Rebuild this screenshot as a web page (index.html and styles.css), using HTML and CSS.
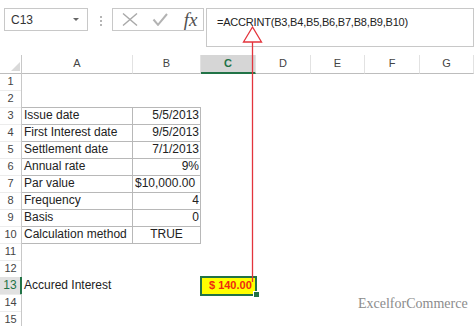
FILE: index.html
```html
<!doctype html>
<html lang="en">
  <head>
    <meta charset="UTF-8" />
    <meta name="viewport" content="width=device-width, initial-scale=1.0" />
    <title>ACCRINT</title>
    <link rel="stylesheet" href="styles.css">
  </head>
  <body>
    <div id="app">
      <div class="formula-bar">
        <div class="name-box">
          <span>C13</span>
          <span class="caret"></span>
        </div>
        <div class="grip"><i></i><i></i><i></i></div>
        <div class="fx-buttons">
          <svg class="cancel" width="16" height="13" viewBox="0 0 16 13">
            <path d="M1 0.5 L15 12.5 M15 0.5 L1 12.5" stroke="#a9a9a9" stroke-width="1.4" fill="none" />
          </svg>
          <svg class="enter" width="16" height="13" viewBox="0 0 16 13">
            <path d="M1.5 6.5 L6 11.8 L15 1" stroke="#b3b3b3" stroke-width="2" fill="none" />
          </svg>
          <span class="fx">fx</span>
        </div>
        <div class="formula">=ACCRINT(B3,B4,B5,B6,B7,B8,B9,B10)</div>
      </div>

      <div class="sheet">
        <div class="row head">
          <div class="corner">
            <svg width="9" height="9" viewBox="0 0 9 9"><path d="M9 0 L9 9 L0 9 Z" fill="#d9d9d9" /></svg>
          </div>
          <div class="col">A</div>
          <div class="col">B</div>
          <div class="col active">C</div>
          <div class="col">D</div>
          <div class="col">E</div>
          <div class="col">F</div>
          <div class="col">G</div>
        </div>

        <div class="row"><div class="rh">1</div><div></div><div></div><div></div><div></div><div></div><div></div><div></div></div>
        <div class="row"><div class="rh">2</div><div class="top"></div><div class="top"></div><div></div><div></div><div></div><div></div><div></div></div>
        <div class="row"><div class="rh">3</div><div class="t">Issue date</div><div class="t num">5/5/2013</div><div></div><div></div><div></div><div></div><div></div></div>
        <div class="row"><div class="rh">4</div><div class="t">First Interest date</div><div class="t num">9/5/2013</div><div></div><div></div><div></div><div></div><div></div></div>
        <div class="row"><div class="rh">5</div><div class="t">Settlement date</div><div class="t num">7/1/2013</div><div></div><div></div><div></div><div></div><div></div></div>
        <div class="row"><div class="rh">6</div><div class="t">Annual rate</div><div class="t num">9%</div><div></div><div></div><div></div><div></div><div></div></div>
        <div class="row"><div class="rh">7</div><div class="t">Par value</div><div class="t num money">$10,000.00</div><div></div><div></div><div></div><div></div><div></div></div>
        <div class="row"><div class="rh">8</div><div class="t">Frequency</div><div class="t num">4</div><div></div><div></div><div></div><div></div><div></div></div>
        <div class="row"><div class="rh">9</div><div class="t">Basis</div><div class="t num">0</div><div></div><div></div><div></div><div></div><div></div></div>
        <div class="row"><div class="rh">10</div><div class="t">Calculation method</div><div class="t mid">TRUE</div><div></div><div></div><div></div><div></div><div></div></div>
        <div class="row"><div class="rh">11</div><div></div><div></div><div></div><div></div><div></div><div></div><div></div></div>
        <div class="row"><div class="rh">12</div><div></div><div></div><div></div><div></div><div></div><div></div><div></div></div>
        <div class="row"><div class="rh active">13</div><div>Accured Interest</div><div></div><div class="result"><span>$</span><span>140.00</span></div><div></div><div></div><div></div><div></div></div>
        <div class="row"><div class="rh">14</div><div></div><div></div><div></div><div></div><div></div><div></div><div></div></div>
        <div class="row"><div class="rh">15</div><div></div><div></div><div></div><div></div><div></div><div></div><div></div></div>
      </div>

      <svg class="callout" width="474" height="326" viewBox="0 0 474 326">
        <path d="M252.5 27 L243.5 42 L261.5 42 Z" stroke="#e3343c" stroke-width="1.3" fill="none" />
        <path d="M252.5 42 L252.5 282" stroke="#e3343c" stroke-width="1.3" />
      </svg>
      <div class="watermark">ExcelforCommerce</div>
    </div>
  </body>
</html>
```

FILE: styles.css
```css
body {
  margin: 0;
  background: #fff;
  font-family: "Liberation Sans", Arial, sans-serif;
  color: #222;
}

#app {
  position: relative;
  width: 474px;
  height: 326px;
  overflow: hidden;
}

/* top formula bar */
.formula-bar {
  display: flex;
  align-items: flex-start;
  height: 55px;
  padding: 8px 0 0 4px;
  box-sizing: border-box;
}

.name-box {
  display: flex;
  align-items: center;
  justify-content: space-between;
  width: 87px;
  height: 23px;
  padding: 0 8px 0 6px;
  border: 1px solid #c8c8c8;
  box-sizing: border-box;
  font-size: 12px;
  color: #333;
}

.caret {
  width: 0;
  height: 0;
  border-left: 3px solid transparent;
  border-right: 3px solid transparent;
  border-top: 3px solid #666;
}

.grip {
  display: flex;
  flex-direction: column;
  gap: 2px;
  margin: 8px 10px 0 12px;
}

.grip i {
  width: 2px;
  height: 2px;
  background: #b5b5b5;
}

.fx-buttons {
  display: flex;
  align-items: center;
  width: 96px;
  height: 23px;
  padding-left: 9px;
  border: 1px solid #c8c8c8;
  box-sizing: border-box;
}

.enter {
  margin-left: 14px;
}

.fx {
  margin-left: 16px;
  font-family: "Liberation Serif", serif;
  font-style: italic;
  font-size: 19px;
  color: #505050;
  line-height: 20px;
}

.formula {
  width: 280px;
  height: 39px;
  margin-left: 2px;
  padding: 7px 0 0 10px;
  border: 1px solid #c8c8c8;
  box-sizing: border-box;
  font-size: 11px;
  letter-spacing: -0.2px;
  color: #222;
}

/* grid */
.row {
  display: grid;
  grid-template-columns: 22px 111px 68px 55px 55px 54px 55px 54px;
  height: 17px;
}

.row > div {
  box-sizing: border-box;
  font-size: 12px;
  line-height: 17px;
  padding: 0 2px;
  white-space: nowrap;
}

.row.head {
  height: 18px;
}

.head > div {
  border-bottom: 1px solid #bdbdbd;
  border-right: 1px solid #e2e2e2;
  text-align: center;
  font-size: 11px;
  line-height: 17px;
  color: #444;
}

.head .corner {
  display: flex;
  align-items: flex-end;
  justify-content: flex-end;
  padding: 0 1px 2px 0;
  border-right: 1px solid #c8c8c8;
}

.head .col.active {
  background: #d6d6d6;
  color: #217346;
  font-weight: bold;
  border-bottom: 2px solid #217346;
}

.row > .rh {
  padding: 0;
  border-right: 1px solid #c8c8c8;
  border-bottom: 1px solid #ececec;
  text-align: center;
  font-size: 11px;
  color: #444;
}

.row > .rh.active {
  background: #e1e1e1;
  color: #217346;
  border-right: 2px solid #217346;
  font-size: 12px;
}

.row > .top {
  border-bottom: 1px solid #b8b8b8;
}

.row > .t {
  border-right: 1px solid #b8b8b8;
  border-bottom: 1px solid #b8b8b8;
}

.row > .num {
  text-align: right;
  padding-right: 1px;
}

.row > .money {
  padding-right: 5px;
}

.row > .mid {
  text-align: center;
}

.row > .result {
  position: relative;
  display: flex;
  gap: 3px;
  padding: 0 0 0 8px;
  background: #ffff00;
  color: #ee2a10;
  font-weight: bold;
  font-size: 11px;
  line-height: 17px;
  outline: 2px solid #217346;
  outline-offset: -1px;
}

.result::after {
  content: "";
  position: absolute;
  right: -4px;
  bottom: -3px;
  width: 5px;
  height: 5px;
  background: #217346;
  border: 1px solid #fff;
}

/* overlays */
.callout {
  position: absolute;
  left: 0;
  top: 0;
  pointer-events: none;
}

.watermark {
  position: absolute;
  left: 358px;
  top: 296px;
  font-family: "Liberation Serif", serif;
  font-size: 14px;
  color: #8c8c8c;
}
```
